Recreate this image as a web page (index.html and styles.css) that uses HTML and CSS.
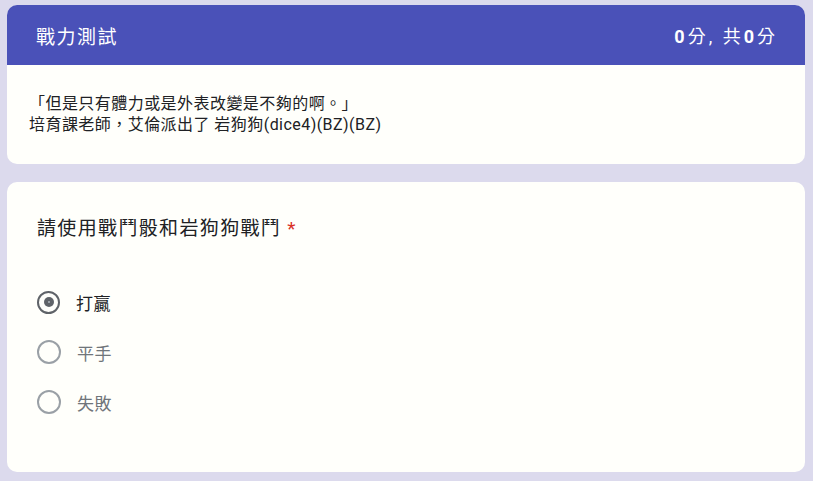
FILE: index.html
```html
<!DOCTYPE html>
<html lang="zh-Hant">
<head>
    <meta charset="utf-8">
    <title>戰力測試</title>
    <link rel="stylesheet" href="styles.css">
</head>
<body>
    <div class="card">
        <div class="card-header">
            <span class="title">戰力測試</span>
            <span class="score"><b>0</b>分,&nbsp;共<b>0</b>分</span>
        </div>
        <div class="card-body">
            <p>「但是只有體力或是外表改變是不夠的啊。」<br>培育課老師，艾倫派出了 岩狗狗(dice4)(BZ)(BZ)</p>
        </div>
    </div>

    <div class="card question">
        <div class="question-title">請使用戰鬥骰和岩狗狗戰鬥 <span class="required">*</span></div>
        <div class="options">
            <label class="option checked"><span class="radio"></span><span class="label">打贏</span></label>
            <label class="option"><span class="radio"></span><span class="label">平手</span></label>
            <label class="option"><span class="radio"></span><span class="label">失敗</span></label>
        </div>
    </div>
</body>
</html>
```

FILE: styles.css
```css
body {
    margin: 0;
    padding: 5px 8px 8px 7px;
    background-color: #dcdaed;
    font-family: Roboto, "Noto Sans CJK TC", sans-serif;
    color: #202124;
}

.card {
    background-color: #fffffb;
    border-radius: 10px;
    overflow: hidden;
}

.card-header {
    height: 60px;
    background-color: #4a51b8;
    color: #ffffff;
    display: flex;
    align-items: center;
    justify-content: space-between;
    padding: 0 27px 0 29px;
}

.title {
    font-size: 19px;
    letter-spacing: 1.5px;
}

.score {
    font-size: 18px;
    letter-spacing: 3px;
}

.card-body {
    padding: 28px 22px 29px;
}

.card-body p {
    margin: 0;
    font-size: 16px;
    line-height: 21px;
    letter-spacing: 0.45px;
}

.question {
    margin-top: 18px;
    padding: 35px 30px 45px;
}

.question-title {
    font-size: 19px;
    line-height: 24px;
    letter-spacing: 1.35px;
}

.required {
    color: #d93025;
}

.options {
    margin-top: 36px;
    display: flex;
    flex-direction: column;
}

.option {
    height: 50px;
    display: flex;
    align-items: center;
}

.radio {
    width: 20px;
    height: 20px;
    border: 2px solid #9aa0a6;
    border-radius: 50%;
    display: flex;
    align-items: center;
    justify-content: center;
    margin-right: 16px;
}

.option.checked .radio {
    border-color: #5f6368;
    border-width: 2.5px;
    width: 19px;
    height: 19px;
}

.option.checked .radio::after {
    content: "";
    width: 10px;
    height: 10px;
    border-radius: 50%;
    background: radial-gradient(circle, #9aa0a6 0 1px, #5f6368 1.5px);
}

.label {
    font-size: 17px;
    letter-spacing: 0.5px;
    color: #70757a;
}

.option.checked .label {
    color: #202124;
}
```
